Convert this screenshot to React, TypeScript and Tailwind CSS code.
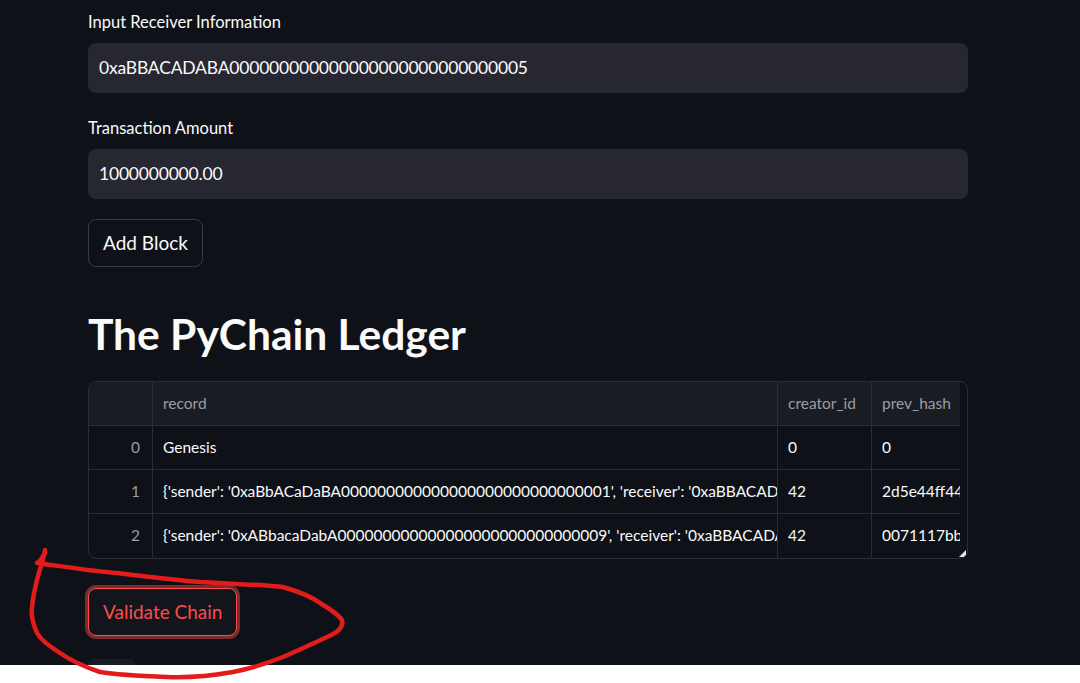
import * as React from "react";

const ZEROS = "00000000000000000000000000000";

const rows = [
  { idx: 0, record: "Genesis", creator: "0", prev: "0" },
  {
    idx: 1,
    record: `{'sender': '0xaBbACaDaBA${ZEROS}1', 'receiver': '0xaBBACADABA${ZEROS}5', 'amount': 1000000000.0}`,
    creator: "42",
    prev: "2d5e44ff44b7c0a9e13f5d2b8c6a47e1f09d3b5a",
  },
  {
    idx: 2,
    record: `{'sender': '0xABbacaDabA${ZEROS}9', 'receiver': '0xaBBACADABA${ZEROS}5', 'amount': 1000000000.0}`,
    creator: "42",
    prev: "0071117bb4f2e8d6a1c93b05e7d4f2a8c61b9e03",
  },
];

function Field({ label, value }: { label: string; value: string }) {
  return (
    <div className="flex flex-col">
      <label className="text-[16.5px] leading-[20px] text-[#fafafa]">{label}</label>
      <div className="mt-[11px] h-[50px] rounded-lg bg-[#262730] px-[11px] flex items-center text-[17.5px] tracking-[-0.2px] text-[#fafafa]">
        {value}
      </div>
    </div>
  );
}

function Ledger() {
  const cell = "h-[44px] flex items-center px-[10px] whitespace-nowrap overflow-hidden border-r border-[#2b2d35]";
  return (
    <div className="relative mt-[23px] w-[880px] h-[178px] rounded-lg border border-[#2b2d35] overflow-hidden">
      <div className="w-[871px] h-full overflow-hidden">
        <div className="grid grid-cols-[64px_625px_94px_300px] w-max text-[15.5px]">
          <div className={`${cell} bg-[#1a1c23] border-b`} />
          <div className={`${cell} bg-[#1a1c23] border-b text-[#9a9ca5]`}>record</div>
          <div className={`${cell} bg-[#1a1c23] border-b text-[#9a9ca5]`}>creator_id</div>
          <div className={`${cell} bg-[#1a1c23] border-b text-[#9a9ca5]`}>prev_hash</div>
          {rows.map((r, i) => {
            const b = i < rows.length - 1 ? "border-b" : "";
            return (
              <React.Fragment key={r.idx}>
                <div className={`${cell} ${b} justify-end pr-[12px] text-[#9a9ca5]`}>{r.idx}</div>
                <div className={`${cell} ${b} text-[#fafafa]`}>{r.record}</div>
                <div className={`${cell} ${b} text-[#fafafa]`}>{r.creator}</div>
                <div className={`${cell} ${b} text-[#fafafa]`}>{r.prev}</div>
              </React.Fragment>
            );
          })}
        </div>
      </div>
      <svg className="absolute right-[1px] bottom-[1px]" width="7" height="7" viewBox="0 0 7 7">
        <polygon points="7,0 7,7 0,7" fill="#e8e8e8" />
      </svg>
    </div>
  );
}

export default function App() {
  return (
    <div
      className="relative w-[1080px] h-[683px] bg-white overflow-hidden"
      style={{ fontFamily: "Lato, 'Noto Sans', sans-serif" }}
    >
      <div className="h-[665px] bg-[#0e1117] overflow-hidden">
        <div className="ml-[88px] w-[880px] pt-[12px] flex flex-col">
          <Field label="Input Receiver Information" value={`0xaBBACADABA${ZEROS}5`} />
          <div className="mt-[25px]">
            <Field label="Transaction Amount" value="1000000000.00" />
          </div>
          <button className="mt-[20px] self-start h-[48px] px-[14px] rounded-lg border border-[#3a3c44] bg-[#0e1117] text-[19px] text-[#fafafa]">
            Add Block
          </button>
          <h2 className="mt-[43px] text-[42.5px] leading-[48px] font-bold text-[#fafafa]">
            The PyChain Ledger
          </h2>
          <Ledger />
          <button className="mt-[29px] self-start h-[48px] px-[14px] rounded-lg border border-[#ff4b4b] bg-[#12151c] text-[19px] text-[#ff4b4b] shadow-[0_0_0_3px_rgba(255,75,75,0.45)]">
            Validate Chain
          </button>
          <div className="mt-[23px] w-[47px] h-[10px] rounded-md bg-[#181b22]" />
        </div>
      </div>
      <svg
        className="absolute inset-0 pointer-events-none"
        width="1080"
        height="683"
        viewBox="0 0 1080 683"
      >
        <path
          d="M45 553 C42 558 40 562 37 563 C60 566 90 571 117 573 C150 577 175 580 200 582 C235 584 265 585 283 587 C300 592 312 597 320 603 C330 609 338 614 342 620 C344 628 337 633 327 637 C310 645 297 651 283 657 C265 664 250 669 233 672 C210 676 190 678 167 677 C140 676 118 675 100 672 C82 666 70 660 60 653 C48 645 41 640 37 633 C33 624 31 615 32 607 C33 597 35 588 37 580 C39 572 41 566 42 563 C43 559 44 556 45 550"
          fill="none"
          stroke="#e31b1b"
          strokeWidth="4.5"
          strokeLinecap="round"
          strokeLinejoin="round"
        />
      </svg>
    </div>
  );
}
